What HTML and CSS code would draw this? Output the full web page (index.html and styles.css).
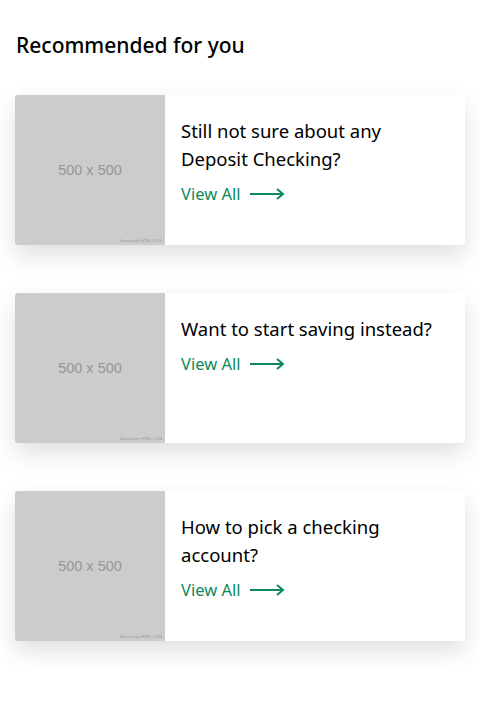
FILE: index.html
```html
<!DOCTYPE html>
<html lang="en">
<head>
<meta charset="utf-8">
<title>Recommended for you</title>
<link rel="stylesheet" href="styles.css">
</head>
<body>
<main class="page">
  <h2 class="heading">Recommended for you</h2>
  <div class="cards">
    <article class="card">
      <div class="thumb"><span class="thumb-size">500 x 500</span><span class="thumb-credit">Sourced by HTML.COM</span></div>
      <div class="body">
        <h3 class="title">Still not sure about any Deposit Checking?</h3>
        <a class="link" href="#">View All <svg class="arrow" width="35" height="12" viewBox="0 0 35 12"><path d="M0 6H33M27 1L33 6L27 11" fill="none" stroke="currentColor" stroke-width="2"/></svg></a>
      </div>
    </article>
    <article class="card">
      <div class="thumb"><span class="thumb-size">500 x 500</span><span class="thumb-credit">Sourced by HTML.COM</span></div>
      <div class="body">
        <h3 class="title">Want to start saving instead?</h3>
        <a class="link" href="#">View All <svg class="arrow" width="35" height="12" viewBox="0 0 35 12"><path d="M0 6H33M27 1L33 6L27 11" fill="none" stroke="currentColor" stroke-width="2"/></svg></a>
      </div>
    </article>
    <article class="card">
      <div class="thumb"><span class="thumb-size">500 x 500</span><span class="thumb-credit">Sourced by HTML.COM</span></div>
      <div class="body">
        <h3 class="title">How to pick a checking account?</h3>
        <a class="link" href="#">View All <svg class="arrow" width="35" height="12" viewBox="0 0 35 12"><path d="M0 6H33M27 1L33 6L27 11" fill="none" stroke="currentColor" stroke-width="2"/></svg></a>
      </div>
    </article>
  </div>
</main>
</body>
</html>
```

FILE: styles.css
```css
html, body {
  margin: 0;
  padding: 0;
  background: #ffffff;
}
body {
  font-family: "Noto Sans", "Open Sans", sans-serif;
  color: #000;
}
.page {
  padding: 30px 15px 80px 15px;
}
.heading {
  margin: 0 0 0 1px;
  font-size: 21px;
  line-height: 30px;
  font-weight: 500;
  color: #000;
}
.cards {
  margin-top: 35px;
  display: flex;
  flex-direction: column;
  gap: 48px;
}
.card {
  display: flex;
  width: 450px;
  height: 150px;
  background: #fff;
  border-radius: 3px;
  overflow: hidden;
  box-shadow: 0 10px 24px rgba(0, 0, 0, 0.13);
}
.thumb {
  position: relative;
  flex: 0 0 150px;
  height: 150px;
  background: #cccccc;
  display: flex;
  align-items: center;
  justify-content: center;
}
.thumb-size {
  font-family: "Liberation Sans", Arial, sans-serif;
  font-size: 14.5px;
  color: #969696;
}
.thumb-credit {
  position: absolute;
  right: 3px;
  bottom: 2px;
  font-family: "Liberation Sans", Arial, sans-serif;
  font-size: 4px;
  color: #9a9a9a;
}
.body {
  padding: 22px 16px 0 16px;
}
.title {
  margin: 0;
  font-size: 18.5px;
  line-height: 28px;
  font-weight: 400;
  color: #000;
  max-width: 235px;
}
.card:nth-child(2) .title {
  max-width: 270px;
}
.link {
  display: flex;
  align-items: center;
  gap: 10px;
  margin-top: 10px;
  font-size: 16.5px;
  line-height: 22px;
  color: #0c8a5c;
  text-decoration: none;
}
.arrow {
  display: block;
}
```
